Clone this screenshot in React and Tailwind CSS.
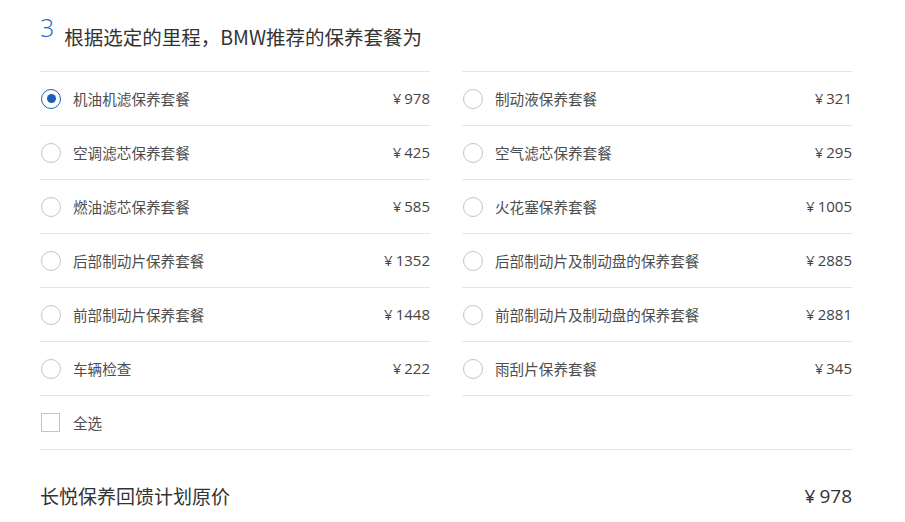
import React from "react";

const left = [
  ["机油机滤保养套餐", "978", true],
  ["空调滤芯保养套餐", "425"],
  ["燃油滤芯保养套餐", "585"],
  ["后部制动片保养套餐", "1352"],
  ["前部制动片保养套餐", "1448"],
  ["车辆检查", "222"],
];
const right = [
  ["制动液保养套餐", "321"],
  ["空气滤芯保养套餐", "295"],
  ["火花塞保养套餐", "1005"],
  ["后部制动片及制动盘的保养套餐", "2885"],
  ["前部制动片及制动盘的保养套餐", "2881"],
  ["雨刮片保养套餐", "345"],
];

const cjk = { fontFamily: '"Noto Sans CJK SC", "Noto Sans", sans-serif' };
const num = { fontFamily: '"Open Sans", "Noto Sans CJK SC", sans-serif' };

function Radio({ checked }) {
  return (
    <span
      className={
        "flex h-[20px] w-[20px] shrink-0 items-center justify-center rounded-full border-[1.5px] " +
        (checked ? "border-[#1c5fb8]" : "border-[#c4c4c4]")
      }
    >
      {checked && <span className="h-[9px] w-[9px] rounded-full bg-[#1c5fb8]" />}
    </span>
  );
}

function Row({ label, price, checked }) {
  return (
    <div className="flex h-[54px] items-center border-b border-[#e4e4e4] pl-[1px]">
      <Radio checked={checked} />
      <span className="ml-[12px] text-[14.6px] text-[#4d4d4d]" style={cjk}>
        {label}
      </span>
      <span className="ml-auto text-[15px] text-[#444]" style={num}>
        ¥<span className="ml-[3px]">{price}</span>
      </span>
    </div>
  );
}

export default function App() {
  return (
    <div className="h-[522px] w-[905px] bg-white">
      <div className="w-[852px] pl-[40px]">
        <div className="flex h-[71px] items-start pt-[12px]">
          <span className="text-[25px] font-light leading-[30px] text-[#1c69d4]" style={num}>
            3
          </span>
          <span className="ml-[10px] mt-[12px] text-[19.5px] leading-[26px] text-[#333]" style={cjk}>
            根据选定的里程，BMW推荐的保养套餐为
          </span>
        </div>
        <div className="grid grid-cols-2 gap-x-[32px]">
          <div className="border-t border-[#e4e4e4]">
            {left.map(([l, p, c]) => (
              <Row key={l} label={l} price={p} checked={c} />
            ))}
          </div>
          <div className="border-t border-[#e4e4e4]">
            {right.map(([l, p]) => (
              <Row key={l} label={l} price={p} />
            ))}
          </div>
        </div>
        <div className="flex h-[54px] items-center border-b border-[#e4e4e4] pl-[1px]">
          <span className="h-[19px] w-[19px] border-[1.5px] border-[#c4c4c4]" />
          <span className="ml-[13px] text-[14.6px] text-[#4d4d4d]" style={cjk}>
            全选
          </span>
        </div>
        <div className="flex h-[92px] items-center">
          <span className="text-[19px] text-[#333]" style={cjk}>
            长悦保养回馈计划原价
          </span>
          <span className="ml-auto text-[19px] text-[#333]" style={num}>
            ¥<span className="ml-[4px]">978</span>
          </span>
        </div>
      </div>
    </div>
  );
}
